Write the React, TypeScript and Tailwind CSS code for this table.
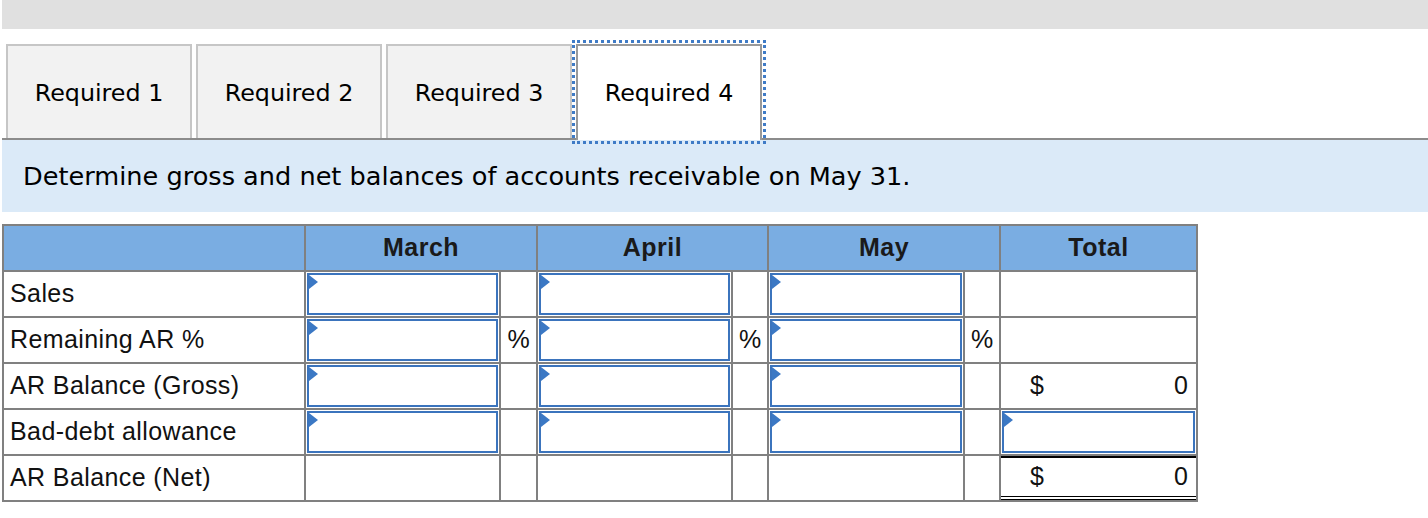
import React from "react"

const tabs = ["Required 1", "Required 2", "Required 3", "Required 4"]

const rows = [
  { label: "Sales", pct: false, total: "none" },
  { label: "Remaining AR %", pct: true, total: "none" },
  { label: "AR Balance (Gross)", pct: false, total: "value" },
  { label: "Bad-debt allowance", pct: false, total: "input" },
  { label: "AR Balance (Net)", pct: false, total: "net" },
]

function InputBox() {
  return (
    <div className="relative m-[1px] h-[42px] border-2 border-[#3b74bd] bg-white">
      <svg className="absolute left-0 top-0" width="10" height="14" viewBox="0 0 10 14">
        <polygon points="0,0 9,7 0,14" fill="#3b78c4" />
      </svg>
    </div>
  )
}

function Cell({ children, className = "" }: { children?: React.ReactNode; className?: string }) {
  return <div className={`bg-white h-[44px] ${className}`}>{children}</div>
}

export default function App() {
  const isInputRow = (i: number) => i < 4
  return (
    <div className="pl-[2px] bg-white min-h-[518px]" style={{ fontFamily: "'DejaVu Sans', Verdana, sans-serif" }}>
      <div className="h-[29px] bg-[#e0e0e0]" />

      <div className="mt-[15px] flex gap-[4px] pl-[4px] border-b-2 border-[#8c8c8c]">
        {tabs.map((t, i) =>
          i === 3 ? (
            <div
              key={t}
              className="-mb-[2px] flex h-[96px] w-[186px] items-center justify-center border-2 border-b-0 border-[#9a9a9a] bg-white pt-[2px] text-[23.8px] text-black outline-[3px] outline-dotted outline-[#3f7bc6] outline-offset-[1px]"
            >
              {t}
            </div>
          ) : (
            <div
              key={t}
              className="flex h-[94px] w-[186px] items-center justify-center border-2 border-b-0 border-[#c6c6c6] bg-[#f2f2f2] pt-[3px] text-[23.8px] text-black"
            >
              {t}
            </div>
          )
        )}
      </div>

      <div className="flex h-[72px] items-center bg-[#dbeaf8] pl-[21px] text-[25.6px] text-black">
        Determine gross and net balances of accounts receivable on May 31.
      </div>

      <div
        className="mt-[12px] grid w-[1196px] gap-[2px] bg-[#808080] p-[2px] text-[#222]"
        style={{
          gridTemplateColumns: "300px 193px 35px 193px 34px 194px 34px 195px",
          fontFamily: "'Liberation Sans', Arial, Helvetica, sans-serif",
        }}
      >
        <div className="h-[44px] bg-[#7aade2]" />
        {["March", "April", "May"].map((m) => (
          <div key={m} className="col-span-2 flex h-[44px] items-center justify-center bg-[#7aade2] text-[25px] font-bold tracking-[0.5px] text-[#1a1a1a]">
            {m}
          </div>
        ))}
        <div className="flex h-[44px] items-center justify-center bg-[#7aade2] text-[25px] font-bold tracking-[0.5px] text-[#1a1a1a]">
          Total
        </div>

        {rows.map((r, i) => (
          <React.Fragment key={r.label}>
            <Cell className="flex items-center pl-[6px] text-[25px] tracking-[0.4px] text-[#111]">{r.label}</Cell>
            {[0, 1, 2].map((k) => (
              <React.Fragment key={k}>
                <Cell>{isInputRow(i) && <InputBox />}</Cell>
                <Cell className="flex items-center justify-center text-[25px] text-[#111]">{r.pct ? "%" : ""}</Cell>
              </React.Fragment>
            ))}
            {r.total === "none" && <Cell />}
            {r.total === "input" && (
              <Cell>
                <InputBox />
              </Cell>
            )}
            {r.total === "value" && (
              <Cell className="flex items-center justify-between pl-[29px] pr-[8px] text-[25px] text-[#111]">
                <span>$</span>
                <span>0</span>
              </Cell>
            )}
            {r.total === "net" && (
              <Cell className="flex items-center justify-between border-t-2 border-b-4 border-double border-t-black border-b-black pl-[29px] pr-[8px] text-[25px] text-[#111]">
                <span>$</span>
                <span>0</span>
              </Cell>
            )}
          </React.Fragment>
        ))}
      </div>
    </div>
  )
}
